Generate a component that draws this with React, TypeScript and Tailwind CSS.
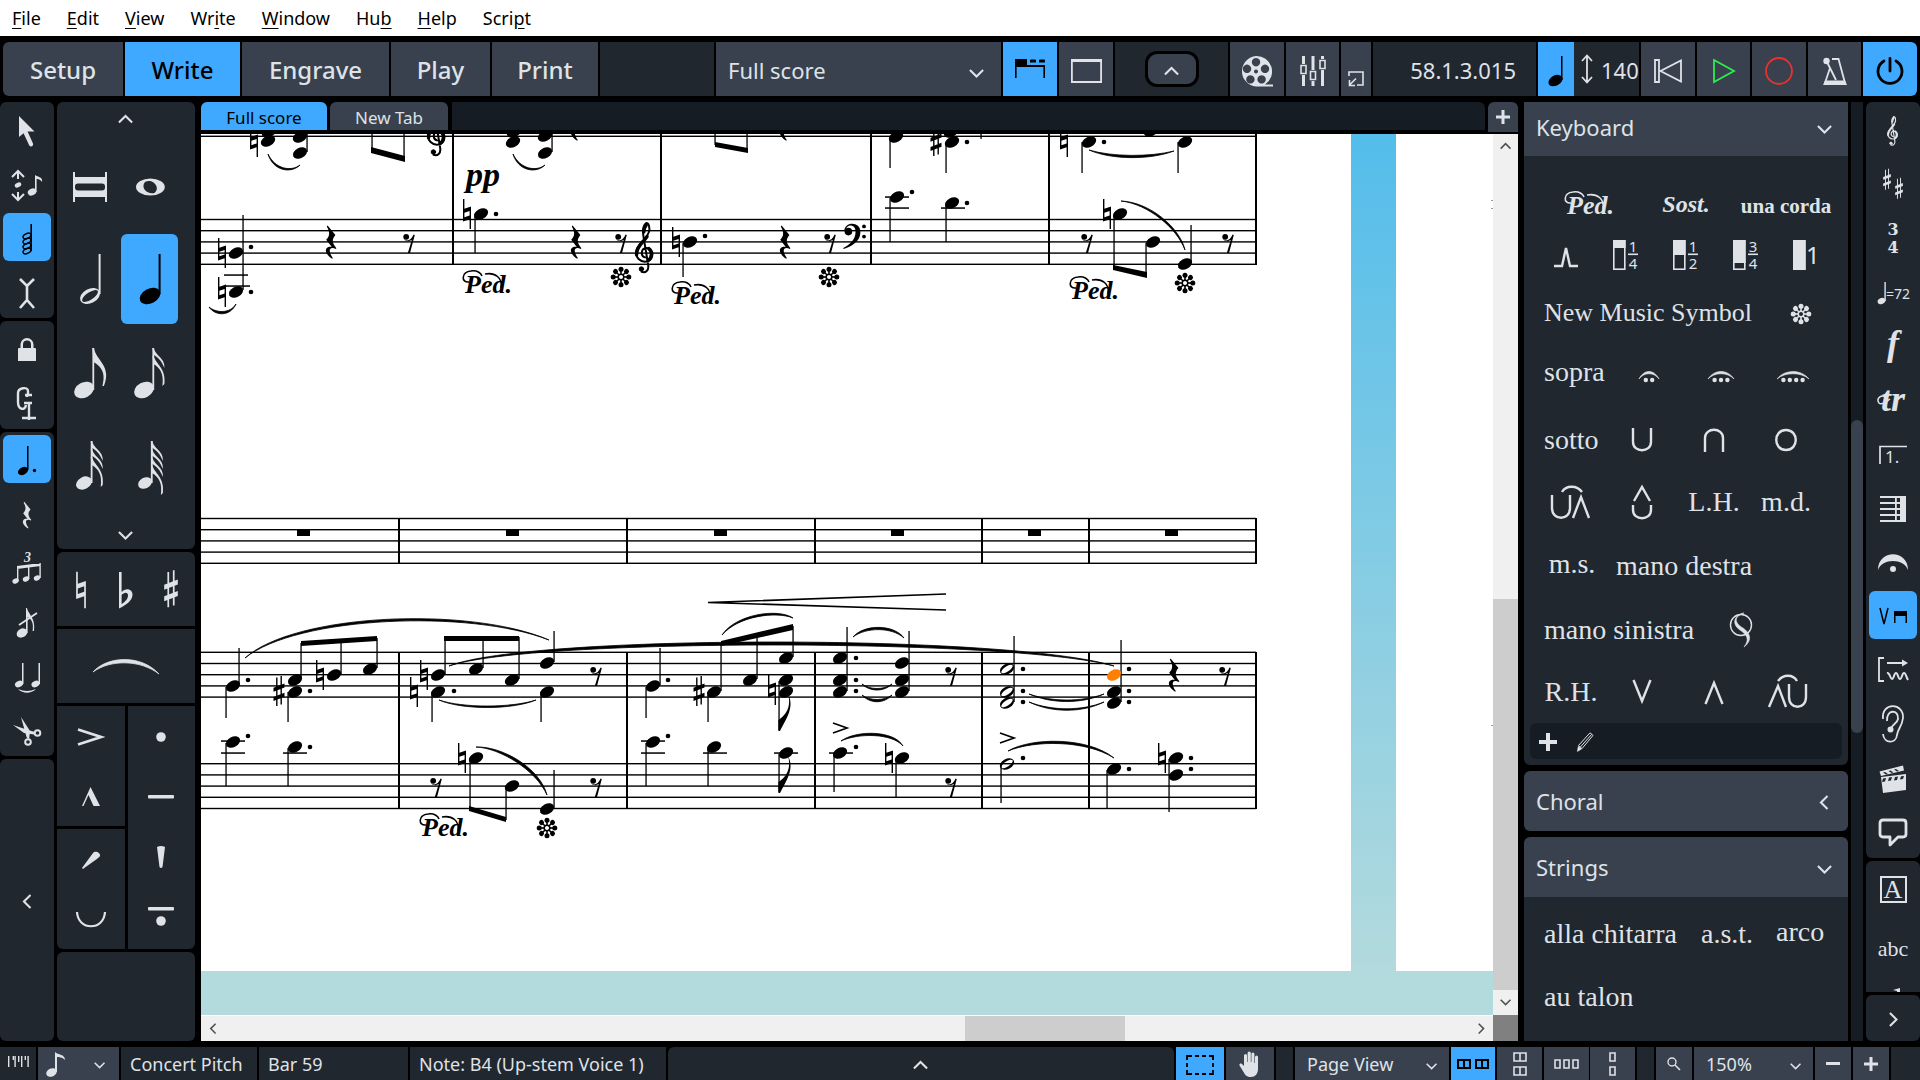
import { Fragment, ReactNode } from 'react';

/* ---------- shared bits ---------- */

function Icon({ w, h, children }: { w: number; h: number; children: ReactNode }) {
  return (
    <svg width={w} height={h} viewBox={`0 0 ${w} ${h}`} fill="currentColor" className="shrink-0 overflow-visible" aria-hidden="true">
      {children}
    </svg>
  );
}

const chevronPaths = {
  up: 'M1 8 L8 1 L15 8',
  down: 'M1 1 L8 8 L15 1',
  left: 'M8 1 L1 8 L8 15',
  right: 'M1 1 L8 8 L1 15',
};

function Chevron({ dir, small }: { dir: 'up' | 'down' | 'left' | 'right'; small?: boolean }) {
  const flat = dir === 'up' || dir === 'down';
  const w = flat ? 16 : 9;
  const h = flat ? 9 : 16;
  const k = small ? 0.7 : 0.94;
  return (
    <svg width={w * k} height={h * k} viewBox={`0 0 ${w} ${h}`} className="shrink-0 overflow-visible" aria-hidden="true">
      <path d={chevronPaths[dir]} fill="none" stroke="currentColor" strokeWidth="2.2" />
    </svg>
  );
}

/* ---------- music glyphs, drawn around their own origin ---------- */

type At = { x: number; y: number };

const Head = ({ x, y, fill }: At & { fill?: string }) => (
  <ellipse rx="7.6" ry="5.1" fill={fill} transform={`translate(${x} ${y}) rotate(-28)`} />
);

const HalfHead = ({ x, y }: At) => (
  <path
    transform={`translate(${x} ${y}) rotate(-28)`}
    fillRule="evenodd"
    d="M-7.6 0 A7.6 5.1 0 1 1 7.6 0 A7.6 5.1 0 1 1 -7.6 0 Z M-6.6 .6 A6.6 2.6 -6 1 0 6.6 -.6 A6.6 2.6 -6 1 0 -6.6 .6 Z"
  />
);

const Natural = ({ x, y, k = 1 }: At & { k?: number }) => (
  <g transform={`translate(${x} ${y}) scale(${k})`}>
    <path d="M-4 -15 H-2.6 V-5.2 L4 -7.4 V15 H2.6 V5.2 L-4 7.4 Z M-2.6 -1.2 V3.2 L2.6 1.4 V-3 Z" fillRule="evenodd" />
  </g>
);

const Sharp = ({ x, y, k = 1 }: At & { k?: number }) => (
  <g transform={`translate(${x} ${y}) scale(${k})`}>
    <path d="M-2.9 -13.5 H-1.5 V15 H-2.9 Z M1.5 -15 H2.9 V13.5 H1.5 Z M-5.5 -3.2 L5.5 -7.4 V-3.4 L-5.5 .8 Z M-5.5 6 L5.5 1.8 V5.8 L-5.5 10 Z" transform="translate(0 -1)" />
  </g>
);

const QuarterRest = ({ x, y, k = 1 }: At & { k?: number }) => (
  <path
    transform={`translate(${x} ${y}) scale(${k})`}
    d="M-3.4 -16.6 L4.4 -7 C.8 -2.6 .8 .6 5.4 6.2 L4.8 7 C1.4 5.2 -1.8 6 -1.2 9.4 C-.9 11.8 .4 14.2 1.8 16 L1.2 16.8 C-3.6 13.8 -6.4 9.6 -4.6 6.6 C-3.6 5 -1.2 4.4 .8 5 L-4.8 -2.2 C-1.2 -6 -.8 -9.4 -4.2 -15.4 Z"
  />
);

const EighthRest = ({ x, y }: At) => (
  <g transform={`translate(${x} ${y})`}>
    <circle cx="-2.8" cy="-6.2" r="2.9" />
    <path d="M-5.2 -5 C-3.6 -1 2 -1.6 4.6 -8.4 L5.8 -8 L1 10 H-1.2 L2.8 -3 C0 -1.2 -4 -1.2 -5.2 -5 Z" />
  </g>
);

const TrebleClef = ({ x, y, k = 1 }: At & { k?: number }) => (
  <g transform={`translate(${x} ${y}) scale(${k})`} fill="none" stroke="currentColor" strokeLinecap="round">
    <path strokeWidth="2" d="M0 4.4 C-4.6 3 -4.4 -4.4 1.4 -5 C9 -5.4 10 7.4 1 8.6 C-5 9.2 -9.4 4.4 -9 -1 C-8.4 -9.4 3.8 -14.6 4.4 -23 C4.6 -28 2.6 -31 .8 -29.6 C-2.2 -27 -2.4 -21 -1.4 -15.6 L3.2 12 C4 17.4 .6 20.2 -3.4 18.8" />
    <path strokeWidth="3.4" d="M-8.4 1.6 C-9 -6 -1.4 -11 2 -16.4 M3.8 -4.4 C7.6 -1.6 7 5 3.4 7.4 M1.2 -28 C-1 -25 -1.2 -23 -1.2 -21" />
    <circle cx="-3.6" cy="16" r="2.2" fill="currentColor" />
  </g>
);

const BassClef = ({ x, y }: At) => (
  <g transform={`translate(${x} ${y})`}>
    <circle cx="-5.6" cy=".6" r="3.8" />
    <path d="M-9.6 0 C-10 -9.4 6.6 -10.4 6.4 1.4 C6.2 10.6 -3 15.6 -10.4 18 L-10.8 17 C-4.4 14 1.6 9 1.6 .6 C1.6 -6.6 -6.6 -7.4 -8.2 -1.6 Z" />
    <circle cx="10" cy="-4.6" r="1.9" />
    <circle cx="10" cy="5.6" r="1.9" />
  </g>
);

const Asterisk = ({ x, y }: At) => (
  <g transform={`translate(${x} ${y})`}>
    <circle r="2.8" fill="none" stroke="currentColor" strokeWidth="1.5" />
    {[0, 45, 90, 135, 180, 225, 270, 315].map((a) => (
      <g key={a} transform={`rotate(${a})`}>
        <rect x="-.8" y="-7" width="1.6" height="4.6" />
        <circle cy="-7.8" r="2.5" />
      </g>
    ))}
  </g>
);

const Ped = ({ x, y }: At) => (
  <g transform={`translate(${x} ${y})`}>
    <text x="2" y="22" fontSize="26" fontWeight="bold" fontStyle="italic" className="font-['Liberation_Serif',serif]">
      Ped.
    </text>
    <path d="M6 11 C-2 12 -2 1 8 0 C14 -1 18 2 19 5 M22 3 C32 1 40 7 38 17" fill="none" stroke="currentColor" strokeWidth="1.6" />
  </g>
);

const DownFlag = ({ x, y }: At) => (
  <path transform={`translate(${x} ${y})`} d="M-.6 0 V-11 C6 -15 13 -24 9 -37 C16 -24 7 -12 1 0 Z" />
);

/* ---------- score data ---------- */

const heads = [
  [268, 141], [269, 132], [300, 137], [300, 153], [513, 142], [514, 132], [545, 136], [545, 153],
  [896, 137], [952, 142], [951, 132], [1089, 142], [1151, 131], [1185, 142],
  [236, 253], [236, 292], [481, 214], [690, 242], [897, 197], [952, 203], [1120, 214], [1153, 242], [1185, 264],
  [233, 686], [295, 680], [295, 692], [334, 675], [370, 669],
  [438, 675], [438, 692], [476, 669], [512, 680], [547, 663], [547, 692],
  [653, 686], [714, 692], [750, 680], [786, 658], [786, 680], [786, 692],
  [840, 658], [840, 680], [840, 692], [902, 663], [902, 680], [902, 692], [1114, 692], [1114, 703],
  [233, 742], [295, 747], [476, 758], [512, 786], [547, 809], [653, 742], [714, 747], [786, 753],
  [840, 753], [902, 758], [1114, 769], [1176, 758], [1176, 775],
];

const halfHeads = [[1007, 669], [1007, 692], [1007, 703], [1007, 764]];

// x, top, bottom
const stems = [
  [261, 130, 134], [307, 134, 152], [372, 134, 150], [404, 134, 158], [552, 134, 152], [715, 134, 145], [747, 134, 150],
  [890, 138, 168], [946, 142, 173], [981, 134, 139], [1082, 142, 173], [1178, 142, 173],
  [243, 215, 290], [475, 215, 253], [683, 243, 277], [890, 198, 242], [946, 204, 242], [1114, 215, 267], [1146, 243, 275], [1191, 225, 263],
  [239, 648, 685], [226, 687, 718], [301, 643, 679], [288, 692, 722], [341, 642, 674], [377, 638, 668],
  [445, 637, 674], [483, 637, 668], [519, 637, 679], [432, 692, 722], [554, 631, 662], [541, 692, 722],
  [660, 648, 685], [646, 687, 718], [721, 643, 691], [708, 692, 722], [757, 636, 679], [793, 626, 657], [779, 681, 730],
  [847, 627, 691], [909, 631, 691], [1014, 636, 702], [1121, 640, 702],
  [226, 743, 786], [288, 748, 786], [470, 759, 810], [506, 787, 820], [554, 770, 808], [646, 743, 786], [708, 748, 786], [779, 754, 792],
  [834, 754, 792], [896, 759, 797], [1001, 765, 803], [1107, 770, 808], [1169, 759, 812],
];

const dots = [
  [967, 142], [1104, 142], [251, 247], [251, 292], [496, 214], [705, 236], [912, 192], [967, 203],
  [248, 680], [310, 691], [454, 691], [668, 680], [856, 658], [856, 680], [856, 691],
  [1023, 669], [1023, 691], [1023, 702], [1129, 669], [1129, 691], [1129, 702],
  [248, 736], [310, 747], [668, 736], [856, 747], [1023, 758], [1129, 769], [1191, 758], [1191, 769],
];

const ledgers = [
  [224, 275], [226, 286], [885, 197], [885, 208], [941, 208], [221, 741], [221, 753], [283, 753],
  [641, 741], [641, 753], [703, 753], [774, 753], [829, 753],
];

const naturals = [
  [254, 142], [1064, 142], [222, 253], [222, 292], [467, 214], [676, 242], [1107, 214],
  [320, 675], [424, 675], [414, 692], [772, 690], [462, 758], [889, 758], [1162, 758],
];

const sharps = [[936, 142], [279, 692], [699, 692]];
const quarterRests = [[331, 242], [576, 242], [785, 242], [576, 124], [785, 124], [1174, 675]];
const eighthRests = [
  [409, 243], [621, 243], [830, 243], [1087, 243], [1228, 243], [596, 676], [951, 676], [1225, 676],
  [436, 787], [596, 787], [951, 787],
];
const pedals = [[463, 271], [672, 282], [1070, 277], [420, 814]];
const releases = [[621, 277], [829, 277], [1185, 283], [547, 828]];
const wholeRests = [303, 512, 720, 897, 1034, 1171];

const beams = [
  'M371 147 L405 156 V162 L371 153 Z',
  'M715 142 L748 148 V153 L715 147 Z',
  'M1113 265 L1147 272 V278 L1113 270 Z',
  'M301 641 L377 636 V641 L301 646 Z',
  'M444 636 H519 V641 H444 Z',
  'M721 641 L793 624 V630 L721 646 Z',
  'M469 806 L506 817 V822 L469 811 Z',
];

// slurs and ties as thin crescents
const slurs = [
  'M268 154 C273 171 291 174 300 165 C291 172 275 169 268 154 Z',
  'M513 154 C518 171 536 174 545 165 C536 172 520 169 513 154 Z',
  'M1089 150 C1112 160 1150 160 1174 151 C1150 157 1112 157 1089 150 Z',
  'M209 307 C215 316 230 317 236 304 C230 314 216 313 209 307 Z',
  'M1121 201 C1150 202 1180 228 1185 250 C1177 228 1148 204 1121 201 Z',
  'M245 658 C295 613 470 606 549 640 C470 609 297 616 245 658 Z',
  'M449 666 C530 634 1010 634 1114 666 C1010 638 530 638 449 666 Z',
  'M439 700 C462 710 512 710 536 700 C512 708 462 708 439 700 Z',
  'M722 635 C736 614 778 608 793 618 C776 611 738 616 722 635 Z',
  'M853 637 C864 624 894 624 904 638 C892 627 866 627 853 637 Z',
  'M862 684 C870 692 884 692 892 684 C884 690 870 690 862 684 Z',
  'M862 695 C870 704 884 704 892 695 C884 701 870 701 862 695 Z',
  'M1029 694 C1052 704 1082 704 1104 694 C1082 702 1052 702 1029 694 Z',
  'M1029 702 C1052 713 1082 713 1104 702 C1082 711 1052 711 1029 702 Z',
  'M476 747 C502 746 540 768 547 795 C536 770 500 748 476 747 Z',
  'M841 741 C856 730 894 730 903 746 C892 733 858 733 841 741 Z',
  'M1008 751 C1032 737 1088 737 1114 758 C1086 740 1034 740 1008 751 Z',
];

const staff = (top: number) =>
  [0, 1, 2, 3, 4].map((i) => <rect key={`${top}-${i}`} x="201" y={top + i * 11.2 - 0.7} width="1055" height="1.4" />);

function Score() {
  return (
    <svg
      viewBox="201 134 1292 881"
      preserveAspectRatio="xMinYMin slice"
      className="block h-full w-full bg-white text-black"
      fill="currentColor"
      role="img"
      aria-label="Full score"
    >
      <defs>
        <linearGradient id="desk" x1="0" y1="134" x2="0" y2="971" gradientUnits="userSpaceOnUse">
          <stop offset="0" stopColor="#53bdeb" />
          <stop offset="1" stopColor="#b3dadd" />
        </linearGradient>
      </defs>
      <rect x="1351" y="134" width="45" height="838" fill="url(#desk)" />
      <rect x="201" y="971" width="1292" height="44" fill="#b3dadd" />

      {[91.5, 219.5, 518.5, 652.3, 763.7].map(staff)}
      {[453, 661, 871, 1049, 1256].map((x) => <rect key={x} x={x - 1} y="134" width="2" height="131" />)}
      {[399, 627, 815, 982, 1089, 1256].map((x) => (
        <Fragment key={x}>
          <rect x={x - 1} y="518" width="2" height="46" />
          <rect x={x - 1} y="652" width="2" height="157" />
        </Fragment>
      ))}
      {wholeRests.map((x) => <rect key={x} x={x - 6} y="530" width="13" height="6" />)}

      {stems.map(([x, a, b]) => <rect key={`${x}-${a}`} x={x - 0.6} y={a} width="1.3" height={b - a} />)}
      {ledgers.map(([x, y]) => <rect key={`${x}-${y}`} x={x} y={y - 0.7} width="24" height="1.5" />)}
      {beams.map((d) => <path key={d} d={d} />)}
      {slurs.map((d) => <path key={d} d={d} stroke="currentColor" strokeWidth=".8" strokeLinejoin="round" />)}
      {heads.map(([x, y]) => <Head key={`${x}-${y}`} x={x} y={y} />)}
      {halfHeads.map(([x, y]) => <HalfHead key={`${x}-${y}`} x={x} y={y} />)}
      <Head x={1114} y={675} fill="#ff8000" />
      {dots.map(([x, y]) => <circle key={`${x}-${y}`} cx={x} cy={y} r="2.3" />)}
      {naturals.map(([x, y]) => <Natural key={`${x}-${y}`} x={x} y={y} />)}
      {sharps.map(([x, y]) => <Sharp key={`${x}-${y}`} x={x} y={y} />)}
      {quarterRests.map(([x, y]) => <QuarterRest key={`${x}-${y}`} x={x} y={y} />)}
      {eighthRests.map(([x, y]) => <EighthRest key={`${x}-${y}`} x={x} y={y} />)}
      {pedals.map(([x, y]) => <Ped key={x} x={x} y={y} />)}
      {releases.map(([x, y]) => <Asterisk key={x} x={x} y={y} />)}
      <TrebleClef x={645} y={253} />
      <TrebleClef x={437} y={136} />
      <BassClef x={854} y={231} />
      <DownFlag x={779} y={731} />
      <DownFlag x={779} y={793} />

      <text x="466" y="186" fontSize="34" fontWeight="bold" fontStyle="italic" className="font-['Liberation_Serif',serif]">
        pp
      </text>
      {/* hairpin and accents */}
      <path
        d="M946 594 L708 602.5 L946 610 M833 723 L847 728 L833 733 M1000 733 L1014 738 L1000 743"
        fill="none"
        stroke="currentColor"
        strokeWidth="1.7"
      />
      <path d="M1491 200 h2 v1 h-2z M1491 208 h2 v1 h-2z M1491 725 h2 v1 h-2z" fill="#999" />
    </svg>
  );
}

/* ---------- menu and mode toolbar ---------- */

const menus = [['', 'F', 'ile'], ['', 'E', 'dit'], ['', 'V', 'iew'], ['Wr', 'i', 'te'], ['', 'W', 'indow'], ['Hu', 'b', ''], ['', 'H', 'elp'], ['Scri', 'p', 't']];

function MenuBar() {
  return (
    <nav className="flex h-9 items-center gap-[26px] bg-white pl-3 text-lg text-black">
      {menus.map(([a, key, b]) => (
        <button key={a + key + b} type="button">
          {a}
          <span className="underline underline-offset-[3px]">{key}</span>
          {b}
        </button>
      ))}
    </nav>
  );
}

function Tool({ label, className, children }: { label: string; className: string; children: ReactNode }) {
  return (
    <button type="button" aria-label={label} className={`flex shrink-0 items-center justify-center ${className}`}>
      {children}
    </button>
  );
}

const modes = [
  ['Setup', 'w-[120px] rounded-l-md bg-[#38414d]'],
  ['Write', 'w-[115px] bg-[#3fa9ff] text-black'],
  ['Engrave', 'w-[147px] bg-[#38414d]'],
  ['Play', 'w-[99px] bg-[#38414d]'],
  ['Print', 'w-[106px] bg-[#38414d]'],
];

function Toolbar() {
  return (
    <div className="flex h-[54px] shrink-0 gap-0.5 px-[3px]">
      {modes.map(([name, look]) => (
        <button key={name} type="button" className={`shrink-0 pt-0.5 text-2xl font-medium ${look}`}>
          {name}
        </button>
      ))}
      <div className="flex-1 bg-[#21272f]" />
      <div className="relative w-[285px] shrink-0">
        <select aria-label="Layout" className="h-full w-full appearance-none bg-[#38414d] pt-0.5 pl-3 text-[22px]">
          <option>Full score</option>
        </select>
        <span className="pointer-events-none absolute top-[27px] right-[17px]"><Chevron dir="down" /></span>
      </div>
      <Tool label="Show tabs" className="w-[54px] bg-[#3fa9ff] text-black">
        <Icon w={30} h={20}>
          <path d="M0 0 h12 v6 h18 v13 h-1.6 v-11 h-26.8 v11 h-1.6z M15 1.5 a1 1 0 0 1 1-1 h4 a1 1 0 0 1 1 1 v2 h-6z M24 1.5 a1 1 0 0 1 1-1 h4 a1 1 0 0 1 1 1 v2 h-6z" />
        </Icon>
      </Tool>
      <Tool label="Hide panels" className="w-[54px] bg-[#38414d] pt-1">
        <Icon w={31} h={24}>
          <path fillRule="evenodd" d="M0 0 h31 v24 h-31z M1.8 3 v19 h27.4 v-19z" />
        </Icon>
      </Tool>
      <div className="flex w-[113px] shrink-0 items-center justify-center bg-[#21272f]">
        <Tool label="Collapse toolbar" className="h-9 w-[54px] rounded-xl border-3 border-black bg-[#38414d] pt-1">
          <Chevron dir="up" />
        </Tool>
      </div>
      <Tool label="Video" className="w-[54px] bg-[#38414d] pt-1">
        <Icon w={34} h={31}>
          <path
            fillRule="evenodd"
            d="M16 0 A15.5 15.5 0 0 1 25 28.5 H33 V30.5 H16 A15.3 15.3 0 0 1 16 0 Z M16 2 a4.2 4.2 0 1 0 .01 0z M7 8.6 a4.2 4.2 0 1 0 .01 0z M25 8.6 a4.2 4.2 0 1 0 .01 0z M10.4 19.2 a4.2 4.2 0 1 0 .01 0z M21.6 19.2 a4.2 4.2 0 1 0 .01 0z M16 13.6 a2 2 0 1 0 .01 0z"
          />
        </Icon>
      </Tool>
      <Tool label="Mixer" className="w-[53px] bg-[#38414d] pt-1">
        <Icon w={26} h={30}>
          <path d="M2 0 h3 v8 h-3z M2 19 h3 v11 h-3z M11.5 0 h3 v14 h-3z M11.5 25 h3 v5 h-3z M21 0 h3 v3 h-3z M21 14 h3 v16 h-3z" />
          <path d="M1 9.5 h5 v8 h-5z M10.5 15.5 h5 v8 h-5z M20 4.5 h5 v8 h-5z" fill="none" stroke="currentColor" strokeWidth="1.6" />
        </Icon>
      </Tool>
      <Tool label="Transport window" className="w-[30px] bg-[#38414d] pt-5">
        <Icon w={16} h={16}>
          <path d="M1 5 V1 H15 V14 H9 M8 7.5 L2 13.5 M1.5 9 V14.5 H7" fill="none" stroke="currentColor" strokeWidth="1.6" />
        </Icon>
      </Tool>
      <div className="flex w-[163px] shrink-0 items-center justify-end bg-[#21272f] pt-0.5 pr-5 text-[22px]">58.1.3.015</div>
      <div className="flex shrink-0 bg-[#21272f]">
        <Tool label="Fixed tempo" className="w-9 bg-[#3fa9ff] pt-1 text-black">
          <Icon w={14} h={30}>
            <Head x={6.5} y={24.6} />
            <rect x="12" y="0" width="1.5" height="24" />
          </Icon>
        </Tool>
        <div className="flex w-[65px] items-center gap-2 pl-[7px] text-[22px]">
          <Icon w={12} h={30}>
            <path d="M6 2 V28 M1 7 L6 1.5 L11 7 M1 23 L6 28.5 L11 23" fill="none" stroke="currentColor" strokeWidth="1.8" />
          </Icon>
          <span className="pt-0.5">140</span>
        </div>
      </div>
      <Tool label="Rewind" className="w-[54px] bg-[#38414d] pt-1">
        <Icon w={28} h={24}>
          <path d="M1 1 h4 v22 h-4z M27 1.5 V22.5 L6.5 12 Z" fill="none" stroke="currentColor" strokeWidth="1.8" />
        </Icon>
      </Tool>
      <Tool label="Play" className="w-[53px] bg-[#38414d] pt-1 text-[#2bee4e]">
        <Icon w={22} h={24}>
          <path d="M1 1 L21 12 L1 23 Z" fill="none" stroke="currentColor" strokeWidth="1.8" />
        </Icon>
      </Tool>
      <Tool label="Record" className="w-[54px] bg-[#38414d] pt-1 text-[#e8322c]">
        <Icon w={28} h={28}>
          <circle cx="14" cy="14" r="13" fill="none" stroke="currentColor" strokeWidth="1.8" />
        </Icon>
      </Tool>
      <Tool label="Click" className="w-[53px] bg-[#38414d] pt-1">
        <Icon w={26} h={28}>
          <path d="M1 28 L3 23.5 H23 L25 28 Z" />
          <path d="M3 26 L8 11 M10 2 H16.5 L23 26 M5.5 6 L14 23" fill="none" stroke="currentColor" strokeWidth="1.8" />
          <circle cx="4.5" cy="4" r="3.2" />
        </Icon>
      </Tool>
      <Tool label="Activate project" className="w-[54px] rounded-r-md bg-[#3fa9ff] pt-1 text-black">
        <Icon w={28} h={28}>
          <path d="M14 1.5 V14 M8 4 A12 12 0 1 0 20 4" fill="none" stroke="currentColor" strokeWidth="2.8" strokeLinecap="round" />
        </Icon>
      </Tool>
    </div>
  );
}

/* ---------- left toolbox ---------- */

const toolbox: { label: string; on?: boolean; art: ReactNode }[][] = [
  [
    { label: 'Select', art: <path d="M7 0 V21 L11.6 17.2 L17 29 A2 2 0 0 0 21 27.4 L15.6 15.6 H22.5 Z" /> },
    {
      label: 'Start note input',
      art: (
        <>
          <path d="M6 9 V2 M0 7 L6 1 L12 7 M6 22 V29 M0 24 L6 30 L12 24" fill="none" stroke="currentColor" strokeWidth="2" />
          <ellipse cx="6" cy="15" rx="3.4" ry="2.3" transform="rotate(-25 6 15)" />
          <ellipse cx="20" cy="22" rx="4.4" ry="3.3" transform="rotate(-25 20 22)" />
          <path d="M23 22 V5 C26 7 31 7 30 12 C28 9 26 9 24.6 9 V22Z" />
        </>
      ),
    },
    {
      label: 'Chords',
      on: true,
      art: (
        <>
          <rect x="18.4" y="0" width="1.6" height="27" />
          {[12, 17, 22, 27].map((y) => (
            <ellipse key={y} cx="15" cy={y} rx="4.2" ry="2.4" fill="none" stroke="currentColor" strokeWidth="1.4" transform={`rotate(-25 15 ${y})`} />
          ))}
        </>
      ),
    },
    { label: 'Insert', art: <path d="M8 1 L15 8 L22 1 M15 7 V23 M8 30 L15 22 L22 30" fill="none" stroke="currentColor" strokeWidth="2.6" /> },
  ],
  [
    {
      label: 'Lock to duration',
      art: <path fillRule="evenodd" d="M6 14 a1 1 0 0 1 1-1 h1.5 v-3.5 a6.5 6.5 0 0 1 13 0 v3.5 h1.5 a1 1 0 0 1 1 1 v12 h-18z M11 13 h8 v-3.5 a4 4 0 0 0 -8 0z" />,
    },
    {
      label: 'Clamp',
      art: (
        <path
          d="M16 5 V2 C16 -3 6 -1 6 4 V13 C6 21 13 22 14 16 M13 6 H20 M15 5 V8 M12 14 H20 M17 15 V31 M10 29 H24"
          fill="none"
          stroke="currentColor"
          strokeWidth="2.4"
        />
      ),
    },
  ],
  [
    {
      label: 'Rhythm dot',
      on: true,
      art: (
        <>
          <ellipse cx="11" cy="25" rx="5.4" ry="3.7" transform="rotate(-28 11 25)" />
          <rect x="15" y="0" width="1.5" height="24" />
          <circle cx="22.5" cy="24.5" r="1.7" />
        </>
      ),
    },
    { label: 'Rests', art: <QuarterRest x={15} y={15} k={0.8} /> },
    {
      label: 'Tuplets',
      art: (
        <>
          <path d="M5 12 L28.6 9 V12 L5 15 Z M5 12 h1.4 v15 h-1.4z M16 11 h1.4 v14 h-1.4z M27.4 9 h1.4 v15 h-1.4z" />
          <ellipse cx="3.6" cy="27" rx="3.3" ry="2.5" transform="rotate(-25 3.6 27)" />
          <ellipse cx="14" cy="25" rx="3.3" ry="2.5" transform="rotate(-25 14 25)" />
          <ellipse cx="25" cy="24" rx="3.3" ry="2.5" transform="rotate(-25 25 24)" />
          <text x="12" y="8" fontSize="14" fontWeight="bold" fontStyle="italic" className="font-['Liberation_Serif',serif]">3</text>
        </>
      ),
    },
    {
      label: 'Grace notes',
      art: (
        <>
          <ellipse cx="10" cy="25" rx="5.6" ry="4.3" transform="rotate(-28 10 25)" />
          <path d="M14 25 V0 H15 C16 6 24 10 22 23 H20.6 C22 14 19 11 15.6 9 V25Z" />
          <path d="M7 17 L25 5" stroke="currentColor" strokeWidth="1.7" />
        </>
      ),
    },
    {
      label: 'Ties',
      art: (
        <>
          <ellipse cx="7" cy="22" rx="4.2" ry="3" transform="rotate(-25 7 22)" />
          <ellipse cx="23.5" cy="22" rx="4.2" ry="3" transform="rotate(-25 23.5 22)" />
          <path d="M10 1 h1.5 v21 h-1.5z M26.5 1 h1.5 v21 h-1.5z M6 27 C11 32 19 32 24 27 C18 29.5 12 29.5 6 27Z" />
        </>
      ),
    },
    {
      label: 'Scissors',
      art: (
        <>
          <path d="M1 9 L16 14 L23 16 L22 18.5 L12 17 Z M9 1 L18 15 L17 24 L14.5 21 Z" />
          <circle cx="25.5" cy="17" r="2.8" fill="none" stroke="currentColor" strokeWidth="2" />
          <circle cx="16" cy="26" r="2.8" fill="none" stroke="currentColor" strokeWidth="2" />
        </>
      ),
    },
  ],
];

function Toolbox() {
  return (
    <aside className="flex w-[54px] shrink-0 flex-col gap-[3px]">
      {toolbox.map((group, i) => (
        <div key={i} className="rounded-md bg-[#21272f] p-[3px]">
          {group.map((t, j) => (
            <button
              key={t.label}
              type="button"
              aria-label={t.label}
              className={`flex h-12 w-12 items-center justify-center rounded-md pt-[3px] ${j ? 'mt-1.5' : ''} ${t.on ? 'bg-[#3fa9ff] text-black' : ''}`}
            >
              <Icon w={30} h={30}>{t.art}</Icon>
            </button>
          ))}
        </div>
      ))}
      <button type="button" aria-label="Collapse" className="flex flex-1 items-center justify-center rounded-md bg-[#21272f] pt-1">
        <Chevron dir="left" />
      </button>
    </aside>
  );
}

// filled head with stem and n flags
function FlagNote({ flags, k }: { flags: number; k: number }) {
  return (
    <g transform={`translate(${20 - 10 * k} 0)`}>
      <ellipse cx={10 * k} cy={42} rx={10.4 * k} ry={7.6 * k} transform={`rotate(-28 ${10 * k} 42)`} />
      <rect x={18.4 * k} y="0" width="1.8" height="42" />
      {Array.from({ length: flags }, (_, i) => (
        <path
          key={i}
          transform={`translate(${18.4 * k} ${i * 8})`}
          d={
            flags === 1
              ? 'M0 0 H1.6 C3 12 20 18 11.5 38 H10 C14 24 8 18 1 14 Z'
              : i === flags - 1
                ? 'M0 0 H1.4 C3 8 14 12 12 28 L10 30 C11.6 18 8 12 1 8 Z'
                : 'M0 0 H1.4 C3 8 13 10 12 20 C9 13 6 9 1 7 Z'
          }
        />
      ))}
    </g>
  );
}

const durations: { label: string; on?: boolean; art: ReactNode }[] = [
  {
    label: 'Double whole note',
    art: <path d="M3 11 h2 v5 h30 v-5 h2 v30 h-2 v-5 h-30 v5 h-2z M8 22.5 a3 3 0 0 0 -3 3 v1 a3 3 0 0 0 3 3 h24 a3 3 0 0 0 3 -3 v-1 a3 3 0 0 0 -3 -3z" fillRule="evenodd" />,
  },
  { label: 'Whole note', art: <path fillRule="evenodd" d="M6 26 A14.4 8.6 0 1 1 34.8 26 A14.4 8.6 0 1 1 6 26 Z M15 21 C10 27 18 34 24.5 32 C31 27 23 17 15 21 Z" /> },
  {
    label: 'Half note',
    art: (
      <>
        <g transform="translate(20 42) scale(1.4)"><HalfHead x={0} y={0} /></g>
        <rect x="28.6" y="0" width="2" height="40" />
      </>
    ),
  },
  {
    label: 'Quarter note',
    on: true,
    art: (
      <>
        <g transform="translate(20 42) scale(1.45)"><Head x={0} y={0} /></g>
        <rect x="28.6" y="0" width="2" height="40" />
      </>
    ),
  },
  { label: 'Eighth note', art: <g transform="translate(-6 1)"><FlagNote flags={1} k={1} /></g> },
  { label: '16th note', art: <g transform="translate(-6 1)"><FlagNote flags={2} k={1} /></g> },
  { label: '32nd note', art: <g transform="translate(-6 1)"><FlagNote flags={3} k={0.8} /></g> },
  { label: '64th note', art: <g transform="translate(-5 1)"><FlagNote flags={4} k={0.7} /></g> },
];

const panelButton = 'flex h-[60px] w-full items-center justify-center pt-0.5';

function NotesPanel() {
  return (
    <aside className="ml-[3px] flex w-[138px] shrink-0 flex-col gap-[3px]">
      <div className="rounded-md bg-[#21272f]">
        <button type="button" aria-label="Scroll up" className="flex h-[39px] w-full items-center justify-center pb-1">
          <Chevron dir="up" />
        </button>
        <div className="grid w-[121px] grid-cols-2 gap-[3px] pl-1">
          {durations.map((d) => (
            <button
              key={d.label}
              type="button"
              aria-label={d.label}
              className={`flex h-[90px] w-[57px] items-center justify-center rounded-md ${d.on ? 'bg-[#3fa9ff] text-black' : ''}`}
            >
              <Icon w={40} h={50}>{d.art}</Icon>
            </button>
          ))}
        </div>
        <button type="button" aria-label="Scroll down" className="flex h-[39px] w-full items-center justify-center pt-3">
          <Chevron dir="down" />
        </button>
      </div>
      <div className="flex h-[74px] items-center justify-center rounded-t-md bg-[#21272f] pt-0.5">
        <button type="button" aria-label="Natural" className="flex w-[45px] justify-center">
          <Icon w={20} h={38}><Natural x={10} y={19} k={1.22} /></Icon>
        </button>
        <button type="button" aria-label="Flat" className="flex w-[45px] justify-center">
          <Icon w={20} h={38}>
            <path d="M3 1 h2.6 v20 C10 16 17 18 16.5 24 C16 30 10 34 3 37.5Z M5.6 24 V33 C9 31 12 28 12 24.5 C12 20.5 8 21 5.6 24Z" fillRule="evenodd" />
          </Icon>
        </button>
        <button type="button" aria-label="Sharp" className="flex w-[45px] justify-center">
          <Icon w={20} h={38}><Sharp x={10} y={19} k={1.24} /></Icon>
        </button>
      </div>
      <button type="button" aria-label="Slur" className="flex h-[74px] items-center justify-center bg-[#21272f] pt-0.5">
        <Icon w={66} h={16}><path d="M0 13 C14 -3 48 -5 66 15 C48 1 18 0 0 13Z" stroke="currentColor" strokeWidth=".8" /></Icon>
      </button>
      <div className="flex gap-[3px]">
        <div className="flex w-[68px] flex-col gap-[3px]">
          <div className="bg-[#21272f]">
            <button type="button" aria-label="Accent" className={panelButton}>
              <Icon w={26} h={18}><path d="M0 1.5 L23 9 L0 16.5" fill="none" stroke="currentColor" strokeWidth="2.8" /></Icon>
            </button>
            <button type="button" aria-label="Marcato" className={panelButton}>
              <Icon w={18} h={20}><path d="M8.5 0 L18 19 H11.5 L6.5 8 L1.5 19 H0 Z" /></Icon>
            </button>
          </div>
          <div className="rounded-bl-md bg-[#21272f]">
            <button type="button" aria-label="Stress" className={panelButton}>
              <Icon w={18} h={18}><path d="M0 17 L11 2 C13 -1 19 2 18 5 C17 7 9 12 1 18Z" /></Icon>
            </button>
            <button type="button" aria-label="Unstress" className={panelButton}>
              <Icon w={30} h={16}><path d="M1 0 C2 19 28 19 29 0" fill="none" stroke="currentColor" strokeWidth="2.2" /></Icon>
            </button>
          </div>
        </div>
        <div className="flex flex-1 flex-col rounded-br-md bg-[#21272f]">
          <button type="button" aria-label="Staccato" className={panelButton}>
            <Icon w={10} h={10}><circle cx="4" cy="5" r="4.8" /></Icon>
          </button>
          <button type="button" aria-label="Tenuto" className={panelButton}>
            <Icon w={28} h={4}><rect width="26" height="3.5" rx="1" /></Icon>
          </button>
          <button type="button" aria-label="Staccatissimo" className={panelButton}>
            <Icon w={10} h={22}><path d="M0 1 Q4 -1 8 1 L5.5 21 Q4 23 2.5 21Z" /></Icon>
          </button>
          <button type="button" aria-label="Tenuto staccato" className={panelButton}>
            <Icon w={28} h={20}><rect width="26" height="3.5" rx="1" /><circle cx="13" cy="14" r="4.8" /></Icon>
          </button>
        </div>
      </div>
      <div className="flex-1 rounded-md bg-[#21272f]" />
    </aside>
  );
}

/* ---------- score area ---------- */

function ScoreArea() {
  return (
    <main className="ml-1.5 flex min-w-0 flex-1 flex-col">
      <div className="flex h-8 items-start">
        <button type="button" className="h-7 w-[126px] rounded-t-md bg-[#3fa9ff] pt-0.5 text-[17px] leading-7 text-black">Full score</button>
        <button type="button" className="ml-[3px] h-7 w-[118px] rounded-t-md bg-[#38414d] pt-0.5 text-[17px] leading-7">New Tab</button>
        <div className="ml-1 h-7 flex-1 rounded-tr-md bg-[#161c23]" />
        <button type="button" aria-label="Add tab" className="ml-[3px] flex h-[30px] w-[30px] items-center justify-center rounded-t-md bg-[#38414d]">
          <Icon w={14} h={14}><path d="M5.5 0 h3 v5.5 h5.5 v3 h-5.5 v5.5 h-3 v-5.5 h-5.5 v-3 h5.5z" /></Icon>
        </button>
      </div>
      <div className="flex min-h-0 flex-1">
        <div className="min-w-0 flex-1 overflow-hidden"><Score /></div>
        <div className="flex w-[25px] flex-col items-center bg-[#f0f0f0] text-[#505050]">
          <div className="flex h-6 items-center"><Chevron dir="up" small /></div>
          <div className="flex-[442]" />
          <div className="w-full flex-[391] bg-[#cdcdcd]" />
          <div className="flex h-[25px] items-center"><Chevron dir="down" small /></div>
        </div>
      </div>
      <div className="flex h-[26px] text-[#505050]">
        <div className="flex flex-1 items-center border-t border-white bg-[#f0f0f0]">
          <div className="flex w-6 justify-center"><Chevron dir="left" small /></div>
          <div className="flex-[740]" />
          <div className="h-full flex-[160] bg-[#cdcdcd]" />
          <div className="flex-[344]" />
          <div className="flex w-6 justify-center"><Chevron dir="right" small /></div>
        </div>
        <div className="w-[25px] bg-[#808080]" />
      </div>
    </main>
  );
}

/* ---------- playing techniques panel ---------- */

function Item({ label, className, children }: { label?: string; className: string; children: ReactNode }) {
  return (
    <button type="button" aria-label={label} className={`flex shrink-0 items-center whitespace-nowrap ${className}`}>
      {children}
    </button>
  );
}

const word = 'justify-start pl-2';

function Stroke({ d, w = 40, h = 40 }: { d: string; w?: number; h?: number }) {
  return (
    <Icon w={w} h={h}>
      <path d={d} fill="none" stroke="currentColor" strokeWidth="2.4" />
    </Icon>
  );
}

function PedalDepth({ fill, top, bottom }: { fill: number; top: string; bottom?: string }) {
  return (
    <Icon w={26} h={30}>
      <rect x=".8" y=".8" width="11" height="28.4" fill="none" stroke="currentColor" strokeWidth="1.6" />
      <rect x="0" y="0" width="12.6" height={fill} />
      {bottom ? (
        <g fontSize="15" textAnchor="middle">
          <text x="20" y="12">{top}</text>
          <rect x="15" y="13.5" width="10" height="1.6" />
          <text x="20" y="29">{bottom}</text>
        </g>
      ) : (
        <text x="13" y="24" fontSize="24">{top}</text>
      )}
    </Icon>
  );
}

function DottedArc({ n }: { n: number }) {
  const w = 8 + n * 6;
  return (
    <Icon w={w} h={11}>
      <path d={`M0 8 C${w * 0.25} -2 ${w * 0.75} -2 ${w} 8 C${w * 0.75} 1 ${w * 0.25} 1 0 8Z`} stroke="currentColor" strokeWidth=".6" />
      {Array.from({ length: n }, (_, i) => <circle key={i} cx={w / 2 + (i - (n - 1) / 2) * 6.4} cy="9" r="2.2" />)}
    </Icon>
  );
}

function GroupHeader({ name, open, look }: { name: string; open: boolean; look: string }) {
  return (
    <button type="button" aria-expanded={open} className={`flex w-full items-center justify-between bg-[#38414d] pr-4 pl-3 text-[22px] ${look}`}>
      {name}
      <span className={open ? 'pt-1' : 'pt-1 pr-1'}><Chevron dir={open ? 'down' : 'left'} /></span>
    </button>
  );
}

function Techniques() {
  return (
    <section className="ml-1.5 flex w-[324px] shrink-0 flex-col overflow-hidden">
      <GroupHeader name="Keyboard" open look="h-[54px] pb-1" />
      <div className="rounded-b-md bg-[#21272f] px-1.5 pt-5 pb-1.5 font-['Liberation_Serif',serif] text-[28px]">
        <div className="pl-1.5">
          <div className="flex h-14">
            <Item className="w-[100px] justify-center"><Icon w={42} h={24}><Ped x={0} y={0} /></Icon></Item>
            <Item className="w-[100px] justify-center text-2xl font-bold italic">Sost.</Item>
            <Item className="w-[100px] justify-center pt-1.5 text-[21px] font-bold">una corda</Item>
          </div>
          <div className="flex h-[46px] font-['Noto_Sans',sans-serif]">
            <Item label="Pedal retake" className="w-[60px] justify-center pt-1">
              <Stroke w={24} h={20} d="M0 19 H8 L12 1 L16 19 H24" />
            </Item>
            <Item className="w-[60px] justify-center"><PedalDepth fill={8} top="1" bottom="4" /></Item>
            <Item className="w-[60px] justify-center"><PedalDepth fill={15} top="1" bottom="2" /></Item>
            <Item className="w-[60px] justify-center"><PedalDepth fill={23} top="3" bottom="4" /></Item>
            <Item className="w-[60px] justify-center"><PedalDepth fill={30} top="1" /></Item>
          </div>
          <div className="flex h-[68px]">
            <Item className={`w-[228px] text-[26px] ${word}`}>New Music Symbol</Item>
            <Item label="Pedal release" className="w-[74px] justify-center pt-1"><Icon w={20} h={20}><Asterisk x={10} y={10} /></Icon></Item>
          </div>
          <div className="flex h-[60px]">
            <Item className={`w-[77px] pb-2 ${word}`}>sopra</Item>
            <Item label="Two-note vibrato" className="w-[72px] justify-center"><DottedArc n={2} /></Item>
            <Item label="Three-note vibrato" className="w-[72px] justify-center"><DottedArc n={3} /></Item>
            <Item label="Four-note vibrato" className="w-[72px] justify-center"><DottedArc n={4} /></Item>
          </div>
          <div className="flex h-16 pt-1">
            <Item className={`w-[70px] ${word}`}>sotto</Item>
            <Item label="Heel" className="w-[72px] justify-center"><Stroke w={20} h={24} d="M1 0 V14 C1 25 19 25 19 14 V0" /></Item>
            <Item label="Heel below" className="w-[72px] justify-center"><Stroke w={20} h={24} d="M1 24 V10 C1 -1 19 -1 19 10 V24" /></Item>
            <Item label="Ring" className="w-[72px] justify-center"><Stroke w={22} h={22} d="M11 1 C24 1 24 21 11 21 C-2 21 -2 1 11 1Z" /></Item>
          </div>
          <div className="flex h-16">
            <Item label="Heel and toe" className="w-[70px] justify-center">
              <Stroke w={40} h={33} d="M1 9 V22 C1 35 19 35 19 22 V9 M22 32 L30 11 L38 32 M11 6 C15 -1 26 -1 31 6" />
            </Item>
            <Item label="Toe over heel" className="w-[72px] justify-center">
              <Stroke w={20} h={34} d="M2 16 L10 2 L18 16 M1 20 V25 C1 36 19 36 19 25 V20" />
            </Item>
            <Item className="w-[72px] justify-center">L.H.</Item>
            <Item className="w-[72px] justify-center">m.d.</Item>
          </div>
          <div className="flex h-16">
            <Item className="w-[72px] justify-center pb-1">m.s.</Item>
            <Item className={word}>mano destra</Item>
          </div>
          <div className="flex h-16">
            <Item className={`w-[168px] ${word}`}>mano sinistra</Item>
            <Item label="Stopped" className="w-[76px] justify-center">
              <Icon w={24} h={34}>
                <circle cx="11" cy="12" r="10.5" fill="none" stroke="currentColor" strokeWidth="1.4" />
                <path d="M14 0 C2 4 6 11 13 15 C20 20 23 27 14 34 C20 26 17 22 10 17 C0 10 6 1 14 0Z" stroke="currentColor" strokeWidth=".6" />
              </Icon>
            </Item>
          </div>
          <div className="flex h-[61px] pb-0.5">
            <Item className="w-[70px] justify-center">R.H.</Item>
            <Item label="Toe" className="w-[72px] justify-center"><Stroke w={20} h={24} d="M1.5 0 L10 21 L18.5 0" /></Item>
            <Item label="Toe below" className="w-[72px] justify-center"><Stroke w={20} h={24} d="M1.5 24 L10 3 L18.5 24" /></Item>
            <Item label="Toe and heel" className="w-[76px] justify-center">
              <Stroke w={40} h={33} d="M1 32 L10 11 L18 32 M21 9 V22 C21 35 38 35 38 22 V9 M10 6 C15 -1 25 -1 29 6" />
            </Item>
          </div>
        </div>
        <div className="flex h-9 items-center gap-[20px] rounded-md bg-[#161c23] pt-0.5 pl-[9px]">
          <button type="button" aria-label="New technique">
            <Icon w={18} h={18}><path d="M7 0 h4 v7 h7 v4 h-7 v7 h-4 v-7 h-7 v-4 h7z" /></Icon>
          </button>
          <button type="button" aria-label="Edit technique">
            <Icon w={18} h={20}>
              <path d="M1.5 13.5 L13 .8 L16 3.4 L5 16.6 Z M3.4 15 L14.6 2.4" fill="none" stroke="currentColor" strokeWidth="1" />
              <path d="M1 14 L5 17 L0 20Z" />
            </Icon>
          </button>
        </div>
      </div>
      <GroupHeader name="Choral" open={false} look="mt-1.5 h-[60px] rounded-md" />
      <GroupHeader name="Strings" open look="mt-1.5 h-[60px] rounded-t-md" />
      <div className="flex-1 bg-[#21272f] pt-1.5 pl-3 font-['Liberation_Serif',serif] text-[28px]">
        <div className="flex h-[62px]">
          <Item className={`w-[157px] ${word}`}>alla chitarra</Item>
          <Item className={`w-[75px] ${word}`}>a.s.t.</Item>
          <Item className={`${word} pb-1`}>arco</Item>
        </div>
        <div className="flex h-16">
          <Item className={word}>au talon</Item>
        </div>
      </div>
    </section>
  );
}

/* ---------- right toolbox ---------- */

const serif = "font-['Liberation_Serif',serif]";

const notations: { label: string; on?: boolean; art: ReactNode }[] = [
  { label: 'Clefs', art: <TrebleClef x={15} y={18} k={0.58} /> },
  { label: 'Key signatures', art: <><Sharp x={9} y={10} k={0.7} /><Sharp x={21} y={19} k={0.7} /></> },
  {
    label: 'Time signatures',
    art: (
      <g fontSize="16" fontWeight="bold" textAnchor="middle" className="font-['DejaVu_Serif',serif]">
        <text x="15" y="11">3</text>
        <text x="15" y="29">4</text>
      </g>
    ),
  },
  {
    label: 'Tempo',
    art: (
      <>
        <ellipse cx="3.5" cy="23" rx="4" ry="3" transform="rotate(-25 3.5 23)" />
        <rect x="6.4" y="4" width="1.4" height="19" />
        <text x="8" y="21" fontSize="14">=72</text>
      </>
    ),
  },
  { label: 'Dynamics', art: <text x="9" y="23" fontSize="36" fontWeight="bold" fontStyle="italic" className={serif}>f</text> },
  {
    label: 'Ornaments',
    art: (
      <>
        <text x="3" y="25" fontSize="36" fontWeight="bold" fontStyle="italic" className={serif}>tr</text>
        <path d="M9 12 C3 7 -2 13 1 17 C4 20 9 15 12 13" fill="none" stroke="currentColor" strokeWidth="1.5" />
      </>
    ),
  },
  {
    label: 'Repeat structures',
    art: (
      <>
        <path d="M2 24 V6.5 H29" fill="none" stroke="currentColor" strokeWidth="1.7" />
        <text x="7" y="23" fontSize="17">1.</text>
      </>
    ),
  },
  { label: 'Bars and barlines', art: <path d="M2 2 h20 v2 h-20z M2 8 h20 v2 h-20z M2 14 h20 v2 h-20z M2 20 h20 v2 h-20z M2 26 h20 v2 h-20z M17 2 h1.8 v26 h-1.8z M22 2 h6 v26 h-6z" /> },
  { label: 'Holds and pauses', art: <><path d="M0 22 C0 1 30 1 30 22 C26 10 4 10 0 22Z" /><circle cx="15" cy="21" r="3" /></> },
  { label: 'Playing techniques', on: true, art: <><path d="M2 6 L6 22 L10 6" fill="none" stroke="currentColor" strokeWidth="1.5" /><path d="M16 9 h13 v12 h-1.5 v-7 h-10 v7 h-1.5z" /></> },
  {
    label: 'Lines',
    art: (
      <>
        <path d="M6 2 H1 V25 H6 M9 7 H25" fill="none" stroke="currentColor" strokeWidth="1.8" />
        <path d="M24 3.5 L30 7 L24 10.5Z" />
        <path d="M9 17 C12 16 12 23 14 23 C16 23 16 17 18 17 C20 17 20 23 22 23 C24 23 24 17 26 17 C28 17 28 21 30 24" fill="none" stroke="currentColor" strokeWidth="2" />
      </>
    ),
  },
  {
    label: 'Listen',
    art: (
      <>
        <path d="M5 9 C3 -8 26 -8 25 8 C24 17 20 18 19 25 C18 34 6 34 5 24 M9 11 C8 -1 21 -1 20 9 C19 14 14 14 13 19" fill="none" stroke="currentColor" strokeWidth="1.8" />
        <circle cx="12.5" cy="19.5" r="3" />
      </>
    ),
  },
  {
    label: 'Video',
    art: (
      <path
        fillRule="evenodd"
        d="M3 13 L28 10 V26 L5 29Z M5 14.5 L8 14 L7 17.5 L4 18Z M11 13.5 L14 13 L13 16.5 L10 17Z M17 13 L20 12.5 L19 16 L16 16.5Z M23 12.2 L26 12 L25 15 L22 15.5Z M1.5 7.5 L25 1.5 L26 6.5 L3 12Z M5 8.5 L8 10.5 L10 10 L7 8Z M10.5 7 L13.5 9 L15.5 8.500 L12.500 6.500Z M16 5.6 L19 7.6 L21 7 L18 5Z"
      />
    ),
  },
  { label: 'Comments', art: <path d="M5 2 H25 Q28 2 28 5 V16 Q28 19 25 19 H20 L12 27 V19 H5 Q2 19 2 16 V5 Q2 2 5 2Z" fill="none" stroke="currentColor" strokeWidth="2.8" strokeLinejoin="round" /> },
];

function NotationsToolbox() {
  return (
    <aside className="ml-[3px] flex w-[54px] shrink-0 flex-col gap-[3px]">
      <div className="rounded-md bg-[#21272f] p-[3px]">
        {notations.map((n, i) => (
          <button
            key={n.label}
            type="button"
            aria-label={n.label}
            className={`flex h-12 w-12 items-center justify-center rounded-md pt-1 ${i ? 'mt-1.5' : ''} ${n.on ? 'bg-[#3fa9ff] text-black' : ''}`}
          >
            <Icon w={30} h={30}>{n.art}</Icon>
          </button>
        ))}
      </div>
      <div className="flex min-h-0 flex-1 flex-col items-center overflow-hidden rounded-t-md bg-[#21272f]">
        <button type="button" className="mt-[15px] flex h-[27px] w-[27px] shrink-0 items-center justify-center border-2 font-['Liberation_Serif',serif] text-[26px] leading-6">
          A
        </button>
        <button type="button" className="mt-8 font-['Liberation_Serif',serif] text-[22px] leading-7">abc</button>
        <div className="mt-[25px] pl-2"><Icon w={8} h={8}><path d="M0 2 L7 0 V8 H4 V3Z" /></Icon></div>
      </div>
      <button type="button" aria-label="Expand" className="flex h-[46px] shrink-0 items-center justify-center rounded-md bg-[#21272f] pt-1">
        <Chevron dir="right" />
      </button>
    </aside>
  );
}

/* ---------- status bar ---------- */

function StatusBar() {
  return (
    <footer className="flex h-[33px] shrink-0 gap-0.5 text-lg">
      <Tool label="MIDI" className="w-9 bg-[#21272f] pb-1">
        <Icon w={21} h={12}>
          <path d="M0 0 h1.4 v11 h-1.4z M4.6 0 h1.4 v4 h-1.4z M6.4 0 h1.4 v11 h-1.4z M10 0 h1.4 v6 h-1.4z M13 0 h1.4 v11 h-1.4z M16.6 0 h1.4 v4 h-1.4z M19.400 0 h1.4 v11 h-1.4z" />
        </Icon>
      </Tool>
      <button type="button" aria-label="Rhythmic grid" className="flex w-[81px] shrink-0 items-center gap-7 bg-[#38414d] pl-2">
        <Icon w={20} h={26}>
          <ellipse cx="5.5" cy="21.5" rx="5.5" ry="4" transform="rotate(-25 5.5 21.5)" />
          <path d="M9 1 C12 4 19 3 19 9 C16 6 13 6 11 6 V21 H9Z" />
        </Icon>
        <span className="pt-1"><Chevron dir="down" small /></span>
      </button>
      <div className="flex w-[136px] shrink-0 items-center bg-[#21272f] pl-[9px]">Concert Pitch</div>
      <div className="flex w-[149px] shrink-0 items-center bg-[#21272f] pl-[9px]">Bar 59</div>
      <div className="flex w-[256px] shrink-0 items-center bg-[#21272f] pl-[9px] whitespace-nowrap">Note: B4 (Up-stem Voice 1)</div>
      <Tool label="Show lower zone" className="min-w-0 flex-1 rounded-t-md bg-[#21272f] pt-1"><Chevron dir="up" /></Tool>
      <Tool label="Marquee tool" className="w-12 bg-[#3fa9ff] pt-0.5 text-black">
        <Icon w={28} h={20}>
          <path d="M1 5 V1 H6 M9 1 H13 M16 1 H20 M23 1 H27 V5 M27 8 V12 M27 15 V19 H23 M20 19 H16 M13 19 H9 M6 19 H1 V15 M1 12 V8" fill="none" stroke="currentColor" strokeWidth="1.8" />
        </Icon>
      </Tool>
      <Tool label="Hand tool" className="w-12 bg-[#38414d]">
        <Icon w={22} h={26}>
          <path d="M5 15 V4.5 a1.5 1.5 0 0 1 3 0 V11 h.6 V2 a1.6 1.6 0 0 1 3.2 0 V11 h.6 V3 a1.5 1.5 0 0 1 3 0 V12 h.6 V6 a1.5 1.5 0 0 1 3 0 V18 C19 23 16 26 12 26 C8 26 6 24 4.5 21 L.5 14.5 C0 12.5 2 12 3 13 Z" />
        </Icon>
      </Tool>
      <div className="w-[17px] shrink-0 bg-[#21272f]" />
      <div className="relative w-[154px] shrink-0">
        <select aria-label="View type" className="h-full w-full appearance-none bg-[#38414d] pl-3">
          <option>Page View</option>
        </select>
        <span className="pointer-events-none absolute top-[16px] right-3"><Chevron dir="down" small /></span>
      </div>
      <Tool label="Spreads horizontally" className="w-11 bg-[#3fa9ff] pt-0.5 text-black">
        <Icon w={32} h={11}><path d="M1 1 h6 v8 h-6z M7 1 h6 v8 h-6z M19 1 h6 v8 h-6z M25 1 h6 v8 h-6z" fill="none" stroke="currentColor" strokeWidth="2" /></Icon>
      </Tool>
      <Tool label="Spreads vertically" className="w-[45px] bg-[#38414d]">
        <Icon w={14} h={24}><path d="M1 1 h6 v8 h-6z M7 1 h6 v8 h-6z M1 15 h6 v8 h-6z M7 15 h6 v8 h-6z" fill="none" stroke="currentColor" strokeWidth="1.6" /></Icon>
      </Tool>
      <div className="flex shrink-0 gap-px">
        <Tool label="Single pages horizontally" className="w-[45px] bg-[#38414d] pt-0.5">
          <Icon w={26} h={11}><path d="M1 1 h5 v8 h-5z M10 1 h5 v8 h-5z M19 1 h5 v8 h-5z" fill="none" stroke="currentColor" strokeWidth="1.6" /></Icon>
        </Tool>
        <Tool label="Single pages vertically" className="w-[45px] bg-[#38414d]">
          <Icon w={8} h={24}><path d="M1 1 h5 v8 h-5z M1 15 h5 v8 h-5z" fill="none" stroke="currentColor" strokeWidth="1.6" /></Icon>
        </Tool>
      </div>
      <div className="w-[17px] shrink-0 bg-[#21272f]" />
      <Tool label="Zoom" className="w-9 bg-[#38414d]">
        <Icon w={14} h={14}><circle cx="5" cy="5" r="4" fill="none" stroke="currentColor" strokeWidth="1.4" /><path d="M8 8 L13 13" stroke="currentColor" strokeWidth="1.6" /></Icon>
      </Tool>
      <div className="relative w-[119px] shrink-0">
        <select aria-label="Zoom level" className="h-full w-full appearance-none bg-[#38414d] pl-3">
          <option>150%</option>
        </select>
        <span className="pointer-events-none absolute top-[16px] right-3"><Chevron dir="down" small /></span>
      </div>
      <Tool label="Zoom out" className="w-9 bg-[#38414d]"><Icon w={14} h={3}><rect width="14" height="3" /></Icon></Tool>
      <Tool label="Zoom in" className="w-9 bg-[#38414d]">
        <Icon w={14} h={14}><path d="M5.5 0 h3 v5.5 h5.5 v3 h-5.5 v5.5 h-3 v-5.5 h-5.5 v-3 h5.5z" /></Icon>
      </Tool>
      <div className="w-[29px] shrink-0 bg-[#21272f]" />
    </footer>
  );
}

export default function App() {
  return (
    <div className="flex h-screen flex-col overflow-hidden bg-black font-['Noto_Sans',sans-serif] text-[#dfe2e7]">
      <MenuBar />
      <div className="h-1.5 shrink-0" />
      <Toolbar />
      <div className="flex min-h-0 flex-1 py-1.5">
        <Toolbox />
        <NotesPanel />
        <ScoreArea />
        <Techniques />
        <div className="ml-[3px] flex w-3 shrink-0 flex-col bg-[#161c23]">
          <div className="flex-[318]" />
          <div className="flex-[313] rounded-full bg-[#38414d]" />
          <div className="flex-[308]" />
        </div>
        <NotationsToolbox />
      </div>
      <StatusBar />
    </div>
  );
}
